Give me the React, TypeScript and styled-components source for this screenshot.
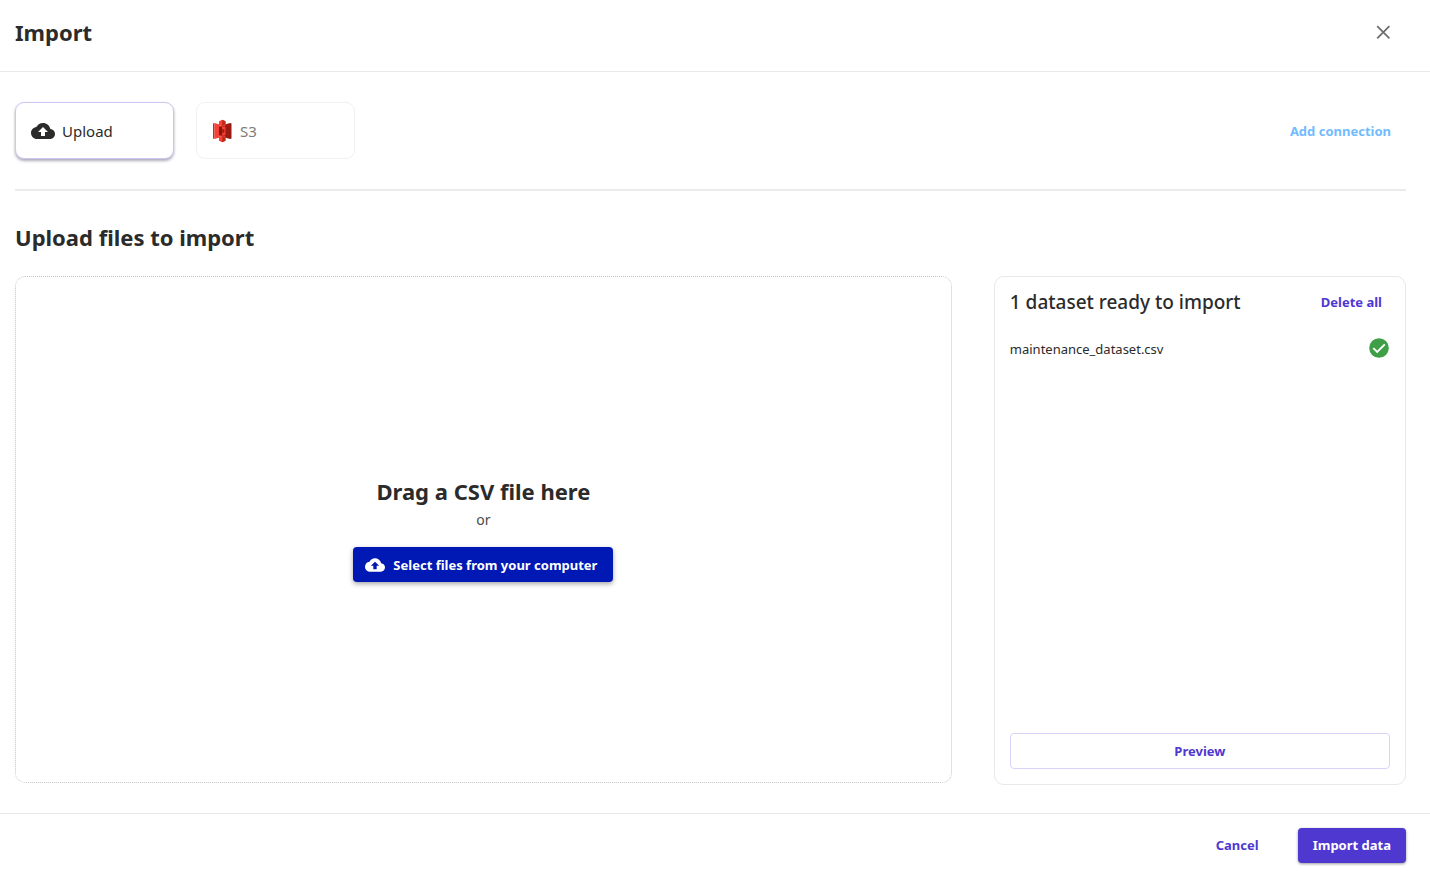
import React from "react";
import styled, { createGlobalStyle } from "styled-components";

const color = {
  text: "#2b2b2b",
  muted: "#7c7c7c",
  line: "#e8e8e8",
  accent: "#4f38d0",
  accentLine: "#d9d3fa",
  primary: "#0018b4",
  link: "#73bbff",
};

const GlobalStyle = createGlobalStyle`
  *, *::before, *::after { box-sizing: border-box; }
  body {
    margin: 0;
    background: #fff;
    color: ${color.text};
    font-family: "Noto Sans", "Open Sans", sans-serif;
  }
  h1, h2, h3, p, ul { margin: 0; padding: 0; }
  button { font-family: inherit; cursor: pointer; }
`;

const Page = styled.div`
  min-height: 100vh;
  display: flex;
  flex-direction: column;
`;

const Header = styled.header`
  display: flex;
  align-items: center;
  justify-content: space-between;
  height: 72px;
  padding: 0 32px 8px 15px;
  border-bottom: 1px solid ${color.line};
`;

const Title = styled.h1`
  font-size: 22px;
  line-height: 32px;
  font-weight: 700;
`;

const IconButton = styled.button`
  display: flex;
  padding: 0;
  border: 0;
  background: none;
  color: #6c6c6c;
`;

const Main = styled.main`
  flex: 1;
  display: flex;
  flex-direction: column;
  padding: 30px 24px 28px 15px;
`;

const SourceBar = styled.div`
  display: flex;
  align-items: center;
  gap: 22px;
  padding: 0 15px 30px 0;
`;

const SourceButton = styled.button<{ $active?: boolean }>`
  display: flex;
  align-items: center;
  gap: 7px;
  width: 159px;
  height: 57px;
  padding: 0 15px;
  border: 1px solid ${(p) => (p.$active ? "#cdc6f2" : "#f1f1f1")};
  border-radius: 9px;
  background: #fff;
  box-shadow: ${(p) => (p.$active ? "0 2px 3px rgba(40, 35, 70, 0.38)" : "none")};
  color: ${(p) => (p.$active ? color.text : color.muted)};
  font-size: 15px;
  line-height: 20px;
`;

const AddConnection = styled.a`
  margin-left: auto;
  color: ${color.link};
  font-size: 13px;
  line-height: 20px;
  font-weight: 700;
  text-decoration: none;
`;

const Divider = styled.hr`
  width: 100%;
  height: 2px;
  margin: 0;
  border: 0;
  background: #ebebeb;
`;

const SectionTitle = styled.h2`
  padding: 30px 0 23px;
  font-size: 22px;
  line-height: 32px;
  font-weight: 700;
`;

const Columns = styled.div`
  flex: 1;
  display: grid;
  grid-template-columns: minmax(0, 25fr) minmax(0, 11fr);
  gap: 42px;
`;

const DropZone = styled.section`
  display: flex;
  flex-direction: column;
  align-items: center;
  justify-content: center;
  margin-bottom: 2px;
  padding-bottom: 2px;
  border: 1px dotted #c4c4c4;
  border-radius: 10px;
`;

const DropTitle = styled.h3`
  padding-bottom: 2px;
  font-size: 22px;
  line-height: 32px;
  font-weight: 700;
`;

const DropHint = styled.p`
  padding-bottom: 16px;
  color: #4a4a4a;
  font-size: 14px;
  line-height: 22px;
`;

const SelectButton = styled.button`
  display: flex;
  align-items: center;
  gap: 8px;
  height: 35px;
  padding: 0 16px 0 12px;
  border: 0;
  border-radius: 4px;
  background: ${color.primary};
  box-shadow: 0 2px 5px rgba(0, 0, 0, 0.35);
  color: #fff;
  font-size: 13px;
  line-height: 20px;
  font-weight: 700;
`;

const Panel = styled.section`
  display: flex;
  flex-direction: column;
  padding: 9px 15px 15px;
  border: 1px solid ${color.line};
  border-radius: 10px;
`;

const PanelHeader = styled.div`
  display: flex;
  align-items: center;
  justify-content: space-between;
  padding-right: 8px;
`;

const PanelTitle = styled.h3`
  font-size: 19px;
  line-height: 32px;
  font-weight: 500;
`;

const FileList = styled.ul`
  flex: 1;
  padding-top: 20px;
  list-style: none;
`;

const FileItem = styled.li`
  display: flex;
  align-items: flex-start;
  justify-content: space-between;
  padding-right: 1px;
  font-size: 13px;
  line-height: 22px;
`;

const TextButton = styled.button`
  padding: 0;
  border: 0;
  background: none;
  color: ${color.accent};
  font-size: 13px;
  line-height: 20px;
  font-weight: 700;
`;

const PreviewButton = styled(TextButton)`
  height: 36px;
  border: 1px solid ${color.accentLine};
  border-radius: 4px;
`;

const Footer = styled.footer`
  display: flex;
  align-items: center;
  justify-content: flex-end;
  gap: 39px;
  height: 60px;
  padding: 3px 24px 0 15px;
  border-top: 1px solid ${color.line};
`;

const ImportButton = styled(TextButton)`
  height: 35px;
  padding: 0 15px;
  border-radius: 4px;
  background: ${color.accent};
  box-shadow: 0 1px 3px rgba(0, 0, 0, 0.4);
  color: #fff;
`;

const CloudUpload = ({ size }: { size: number }) => (
  <svg width={size} height={size} viewBox="0 0 24 24" fill="currentColor" aria-hidden="true">
    <path d="M19.35 10.04C18.67 6.59 15.64 4 12 4 9.11 4 6.6 5.64 5.35 8.04 2.34 8.36 0 10.91 0 14c0 3.31 2.69 6 6 6h13c2.76 0 5-2.24 5-5 0-2.64-2.05-4.78-4.65-4.96zM14 13v4h-4v-4H7l5-5 5 5h-3z" />
  </svg>
);

const CloseIcon = () => (
  <svg width="30" height="24" viewBox="0 0 30 24" aria-hidden="true">
    <path d="M9.200 6.200l12.200 12.200M21.400 6.200L9.200 18.400" stroke="currentColor" strokeWidth="1.700" fill="none" />
  </svg>
);

const BucketIcon = () => (
  <svg width="21" height="24" viewBox="0 0 21 24" aria-hidden="true">
    <path d="M1 4.500L2.500 3.900V20.100L1 19.500z" fill="#c9281c" />
    <path d="M2.500 3.900L7.500 5.600V18.400L2.500 20.100z" fill="#f44336" />
    <path d="M7 6.500h7v11H7z" fill="#d32d20" />
    <path d="M19.500 4.500L18 3.900 13 5.600V18.400l5 1.700 1.500-.6z" fill="#9c1a12" />
    <path d="M7 2.200L10.200 .8 13.500 2.200V6.200L10.200 7 7 6.200z" fill="#f44336" />
    <path d="M10.200 .8l3.300 1.400v4L10.200 7z" fill="#c3281b" />
    <path d="M7 21.800l3.200 1.400 3.300-1.400v-4L10.200 17 7 17.800z" fill="#f44336" />
    <path d="M10.200 23.200l3.300-1.400v-4L10.200 17z" fill="#c3281b" />
    <path d="M7 8.300l3.200-.6v8.600L7 15.700z" fill="#8c150e" />
    <path d="M10.200 7.700l3.300.6v7.400l-3.300.6z" fill="#f44336" />
    <path d="M10.200 10l2.200.3v3.400l-2.200.3z" fill="#a41d13" />
  </svg>
);

const CheckCircle = () => (
  <svg width="20" height="20" viewBox="0 0 20 20" role="img" aria-label="Ready">
    <circle cx="10" cy="10" r="9.800" fill="#3f9f46" />
    <path d="M4.300 10.100l3.900 3.900 7.600-7.700" fill="none" stroke="#fff" strokeWidth="1.900" />
  </svg>
);

export default function App() {
  return (
    <>
      <GlobalStyle />
      <Page>
        <Header>
          <Title>Import</Title>
          <IconButton type="button" aria-label="Close">
            <CloseIcon />
          </IconButton>
        </Header>
        <Main>
          <SourceBar>
            <SourceButton type="button" $active aria-pressed="true">
              <CloudUpload size={24} />
              Upload
            </SourceButton>
            <SourceButton type="button" aria-pressed="false">
              <BucketIcon />
              S3
            </SourceButton>
            <AddConnection href="#add-connection">Add connection</AddConnection>
          </SourceBar>
          <Divider />
          <SectionTitle>Upload files to import</SectionTitle>
          <Columns>
            <DropZone>
              <DropTitle>Drag a CSV file here</DropTitle>
              <DropHint>or</DropHint>
              <SelectButton type="button">
                <CloudUpload size={20} />
                Select files from your computer
              </SelectButton>
            </DropZone>
            <Panel>
              <PanelHeader>
                <PanelTitle>1 dataset ready to import</PanelTitle>
                <TextButton type="button">Delete all</TextButton>
              </PanelHeader>
              <FileList>
                <FileItem>
                  maintenance_dataset.csv
                  <CheckCircle />
                </FileItem>
              </FileList>
              <PreviewButton type="button">Preview</PreviewButton>
            </Panel>
          </Columns>
        </Main>
        <Footer>
          <TextButton type="button">Cancel</TextButton>
          <ImportButton type="button">Import data</ImportButton>
        </Footer>
      </Page>
    </>
  );
}
